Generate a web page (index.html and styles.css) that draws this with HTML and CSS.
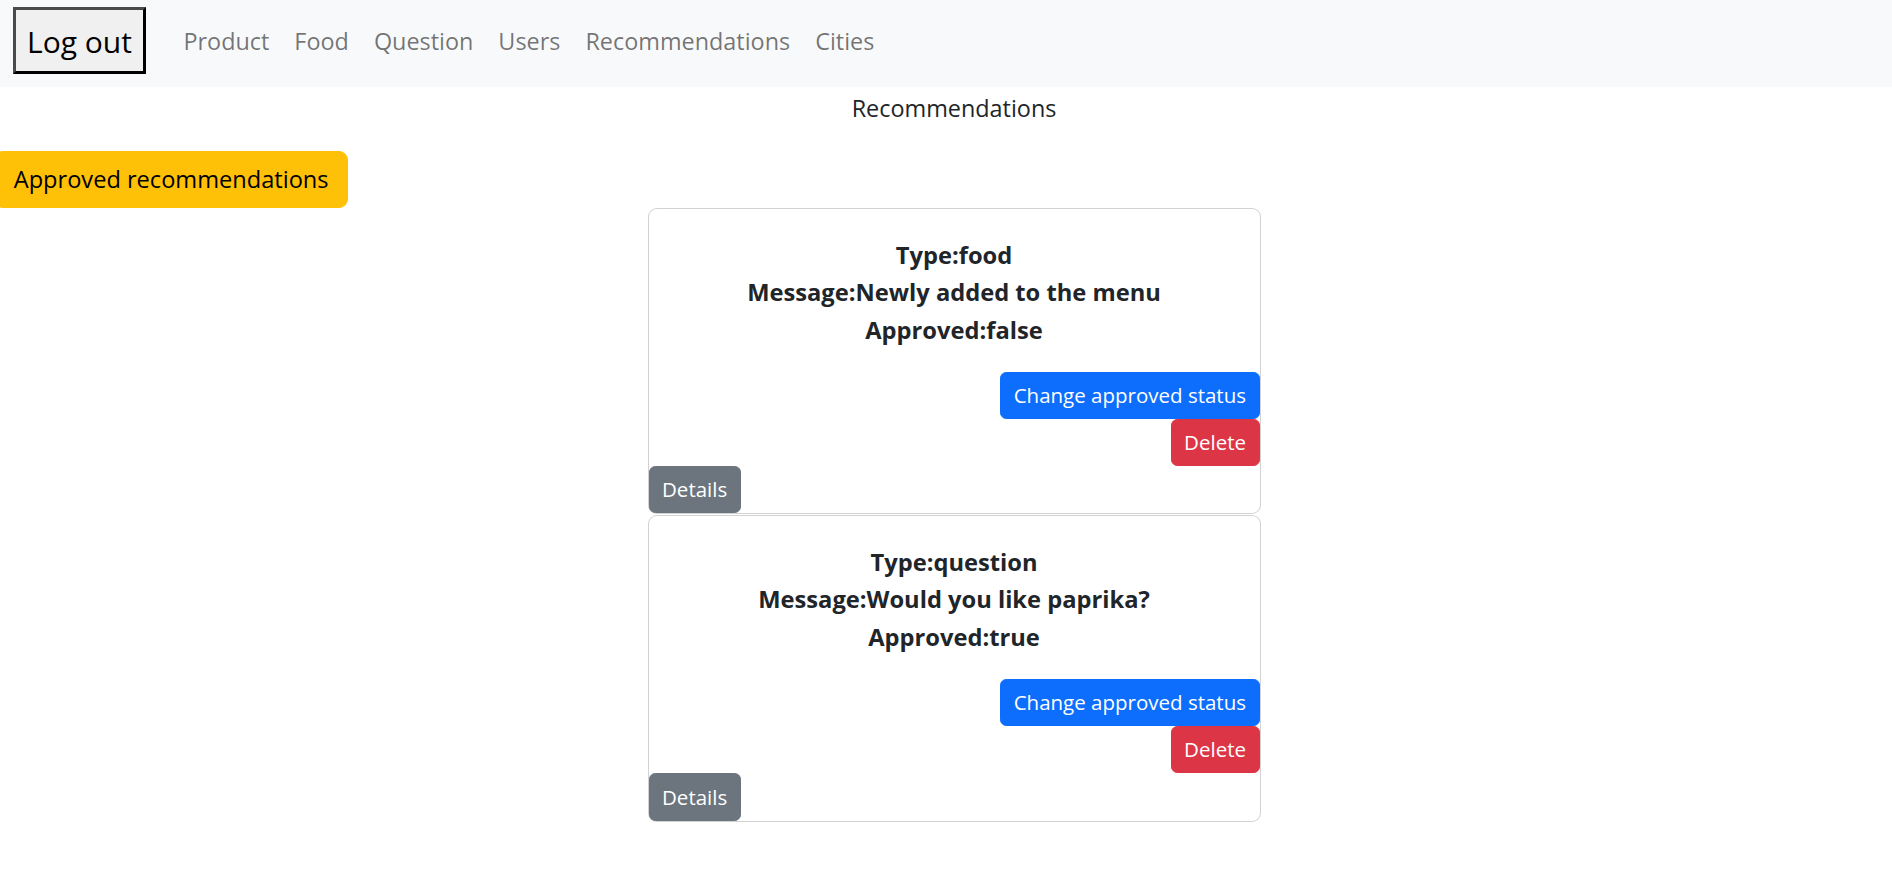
FILE: index.html
```html
<!DOCTYPE html>
<html lang="en">
<head>
<meta charset="utf-8">
<title>Recommendations</title>
<link rel="stylesheet" href="styles.css">
</head>
<body>
<nav class="navbar">
  <button class="logout">Log out</button>
  <ul class="nav">
    <li><a class="nav-link" href="#">Product</a></li>
    <li><a class="nav-link" href="#">Food</a></li>
    <li><a class="nav-link" href="#">Question</a></li>
    <li><a class="nav-link" href="#">Users</a></li>
    <li><a class="nav-link" href="#">Recommendations</a></li>
    <li><a class="nav-link" href="#">Cities</a></li>
  </ul>
</nav>
<main class="page">
  <p class="title">Recommendations</p>
  <button class="btn btn-warning">Approved recommendations</button>
  <div class="list">
    <div class="card">
      <div class="card-body">
        <div class="line">Type:food</div>
        <div class="line">Message:Newly added to the menu</div>
        <div class="line">Approved:false</div>
      </div>
      <div class="actions">
        <button class="btn-sm btn-primary">Change approved status</button>
        <button class="btn-sm btn-danger">Delete</button>
        <button class="btn-sm btn-secondary details">Details</button>
      </div>
    </div>
    <div class="card">
      <div class="card-body">
        <div class="line">Type:question</div>
        <div class="line">Message:Would you like paprika?</div>
        <div class="line">Approved:true</div>
      </div>
      <div class="actions">
        <button class="btn-sm btn-primary">Change approved status</button>
        <button class="btn-sm btn-danger">Delete</button>
        <button class="btn-sm btn-secondary details">Details</button>
      </div>
    </div>
  </div>
</main>
</body>
</html>
```
FILE: styles.css
```css
html, body {
  margin: 0;
  padding: 0;
  overflow-x: hidden;
}
body {
  font-family: "Segoe UI", "Open Sans", "Noto Sans", sans-serif;
  font-size: 23.4px;
  line-height: 37.5px;
  color: #212529;
  background: #fff;
}
.navbar {
  box-sizing: border-box;
  height: 87px;
  background: #f8f9fa;
  display: flex;
  align-items: center;
  padding: 7px 0 13px 13px;
}
.logout {
  box-sizing: border-box;
  height: 67px;
  font-family: "Segoe UI", "Open Sans", sans-serif;
  font-size: 30px;
  line-height: 40px;
  color: #000;
  background: #f0f0f0;
  border: 3px solid;
  border-color: #4a4a4a #000 #000 #4a4a4a;
  padding: 2px 11px 0;
  margin-right: 25px;
}
.nav {
  display: flex;
  list-style: none;
  margin: 0;
  padding: 0;
}
.nav-link {
  display: block;
  padding: 3px 12.5px 0;
  color: rgba(0, 0, 0, 0.55);
  text-decoration: none;
}
.page {
  margin: 0 -22px 0 -6px;
}
.title {
  text-align: center;
  margin: 3px 0 23px;
}
.btn {
  display: block;
  font-family: inherit;
  font-size: 23.6px;
  line-height: 37.5px;
  padding: 9px 18.75px;
  border: 1.25px solid transparent;
  border-radius: 9px;
  cursor: pointer;
}
.btn-warning {
  background: #ffc107;
  border-color: #ffc107;
  color: #000;
}
.list {
  display: flex;
  flex-direction: column;
  align-items: center;
  gap: 1px;
}
.card {
  width: 613px;
  box-sizing: border-box;
  border: 1px solid rgba(0, 0, 0, 0.175);
  border-radius: 9px;
  background: #fff;
}
.card-body {
  padding: 27.5px 25px 22.5px;
  text-align: center;
  font-weight: 700;
  font-size: 23.7px;
}
.actions {
  display: flex;
  flex-direction: column;
  align-items: flex-end;
}
.btn-sm {
  font-family: inherit;
  font-size: 20.5px;
  line-height: 32.8px;
  padding: 6.25px 12.5px;
  border: 1.25px solid transparent;
  border-radius: 6.25px;
  color: #fff;
  cursor: pointer;
}
.btn-primary {
  background: #0d6efd;
  border-color: #0d6efd;
}
.btn-danger {
  background: #dc3545;
  border-color: #dc3545;
}
.btn-secondary {
  background: #6c757d;
  border-color: #6c757d;
}
.details {
  align-self: flex-start;
}
```
